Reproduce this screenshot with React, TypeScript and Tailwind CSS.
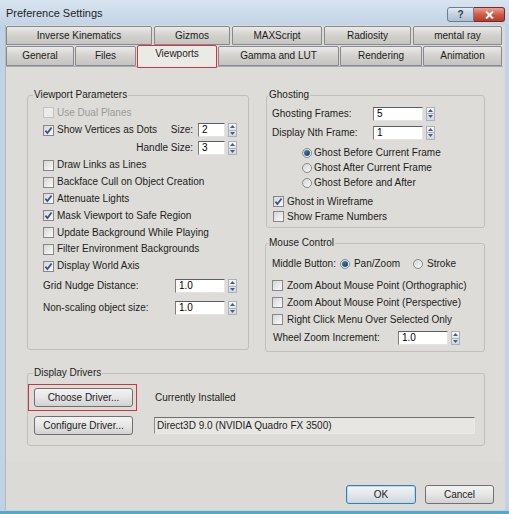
import React from 'react';

const sans = "font-['Liberation_Sans',Arial,sans-serif]";

type Tab = { label: string; w: string; active?: boolean };

const topTabs: Tab[] = [
  { label: 'Inverse Kinematics', w: 'w-[146px]' },
  { label: 'Gizmos', w: 'w-[76px]' },
  { label: 'MAXScript', w: 'w-[90px]' },
  { label: 'Radiosity', w: 'w-[87px]' },
  { label: 'mental ray', w: 'w-[89px]' },
];

const bottomTabs: Tab[] = [
  { label: 'General', w: 'w-[68px]' },
  { label: 'Files', w: 'w-[61px]' },
  { label: 'Viewports', w: 'w-[80px]', active: true },
  { label: 'Gamma and LUT', w: 'w-[121px]' },
  { label: 'Rendering', w: 'w-[82px]' },
  { label: 'Animation', w: 'w-[79px]' },
];

function TabButton({ tab }: { tab: Tab }) {
  if (tab.active) {
    return (
      <div
        className={`relative z-10 -mt-px flex h-[23px] shrink-0 justify-center rounded-t-[2px] border border-[#d3353c] bg-[#ebeae7] pt-[2px] leading-[12px] ${tab.w}`}
      >
        {tab.label}
      </div>
    );
  }
  return (
    <div
      className={`flex h-full shrink-0 items-center justify-center rounded-t-[2px] border border-[#86898f] bg-gradient-to-b from-[#ebeae8] via-[#d3d1cd] to-[#c6c4c0] ${tab.w}`}
    >
      {tab.label}
    </div>
  );
}

function Check({ on, off }: { on?: boolean; off?: boolean }) {
  return (
    <span
      className={
        off
          ? 'flex h-[11px] w-[11px] shrink-0 items-center justify-center border border-[#c2c2c2] bg-[#ecebe9]'
          : 'flex h-[11px] w-[11px] shrink-0 items-center justify-center border border-[#878787] bg-gradient-to-br from-[#d6d6d6] to-[#fbfbfb]'
      }
    >
      {on && (
        <svg width="9" height="9" viewBox="0 0 9 9">
          <path d="M1.4 4.6 L3.4 7.1 L7.6 1.4" fill="none" stroke="#3a4f8c" strokeWidth="1.7" />
        </svg>
      )}
    </span>
  );
}

function Radio({ on }: { on?: boolean }) {
  return (
    <span className="flex h-[10px] w-[10px] shrink-0 items-center justify-center rounded-full border border-[#8a8a8a] bg-gradient-to-br from-[#d4d4d4] to-[#fafafa]">
      {on && <span className="h-[6px] w-[6px] rounded-full bg-gradient-to-br from-[#3f86b8] to-[#173f6b]" />}
    </span>
  );
}

function Field({ value, w }: { value: string; w: string }) {
  return (
    <span
      className={`flex h-[14px] shrink-0 items-center border border-t-[#5d5d5d] border-l-[#7c7c7c] border-r-[#e4e4e4] border-b-[#e4e4e4] bg-white pl-[3px] text-black ${w}`}
    >
      {value}
    </span>
  );
}

function Spin() {
  return (
    <span className="ml-[3px] flex h-[14px] w-[9px] shrink-0 flex-col border border-[#a9b1bd] bg-gradient-to-b from-[#f4f6f9] to-[#d3d9e2]">
      <span className="flex flex-1 items-center justify-center border-b border-[#a9b1bd]">
        <svg width="5" height="3" viewBox="0 0 5 3">
          <path d="M0 3 L2.5 0 L5 3Z" fill="#4f5c72" />
        </svg>
      </span>
      <span className="flex flex-1 items-center justify-center">
        <svg width="5" height="3" viewBox="0 0 5 3">
          <path d="M0 0 L2.5 3 L5 0Z" fill="#4f5c72" />
        </svg>
      </span>
    </span>
  );
}

function CheckRow({ label, on, off, cls }: { label: string; on?: boolean; off?: boolean; cls: string }) {
  return (
    <div className={`flex items-center ${cls}`}>
      <Check on={on} off={off} />
      <span className={off ? 'text-[#9b9a98]' : ''}>{label}</span>
    </div>
  );
}

function WinButton({ label, w, def }: { label: string; w: string; def?: boolean }) {
  return (
    <div
      className={
        def
          ? `flex h-[19px] shrink-0 items-center justify-center rounded-[3px] border border-[#3a7bb0] bg-gradient-to-b from-[#f3f5f7] via-[#e3e7ea] to-[#cfd6dc] shadow-[inset_0_0_0_1px_#b4dcf5] ${w}`
          : `flex h-[19px] shrink-0 items-center justify-center rounded-[3px] border border-[#707070] bg-gradient-to-b from-[#f3f3f3] via-[#e6e6e6] to-[#d2d2d2] ${w}`
      }
    >
      {label}
    </div>
  );
}

export default function App() {
  return (
    <div className={`flex h-[514px] w-[509px] flex-col border-b-[3px] border-[#59a7c7] bg-[#bfd2e6] text-[10px] leading-[12px] text-[#1c1c1c] ${sans}`}>
      {/* title bar */}
      <div className="flex h-[25px] shrink-0 items-start bg-gradient-to-b from-[#d8e4f0] to-[#c3d4e6] pl-[6px] pr-[4px]">
        <span className="mt-[6px] text-[11px] leading-[14px] text-[#1e1e1e]">Preference Settings</span>
        <div className="ml-auto mt-[7px] flex">
          <div className="flex h-[15px] w-[27px] items-center justify-center rounded-l-[3px] border border-[#6e7d90] bg-gradient-to-b from-[#e3ebf4] via-[#c4d1df] to-[#aebfd2] text-[10px] font-bold text-[#2d3b4e]">
            ?
          </div>
          <div className="flex h-[15px] w-[31px] items-center justify-center rounded-r-[3px] border border-l-0 border-[#7a2a22] bg-gradient-to-b from-[#e8a294] via-[#d0594a] to-[#b93a2a]">
            <svg width="9" height="8" viewBox="0 0 9 8">
              <path d="M1 0.5 L8 7.5 M8 0.5 L1 7.5" stroke="#ffffff" strokeWidth="2" />
            </svg>
          </div>
        </div>
      </div>

      {/* client */}
      <div className="mb-px ml-[5px] mr-[4px] flex flex-1 flex-col border-l border-[#b8b8b8] bg-[#dcdad6]">
        {/* tabs */}
        <div className="flex flex-col pt-px">
          <div className="flex h-[19px] gap-[2px]">
            {topTabs.map((t) => (
              <TabButton key={t.label} tab={t} />
            ))}
          </div>
          <div className="mt-px flex h-[20px] gap-px">
            {bottomTabs.map((t) => (
              <TabButton key={t.label} tab={t} />
            ))}
          </div>
        </div>

        {/* tab page */}
        <div className="mr-[2px] border-t border-[#a9abae] bg-[#dedcd8] pb-[15px] pl-[21px] pt-[22px]">
          <div className="flex gap-[17px]">
            {/* Viewport Parameters */}
            <fieldset className="h-[261px] w-[222px] shrink-0 rounded-[3px] border border-[#c1bfbb]">
              <legend className="ml-[5px] px-[1px]">Viewport Parameters</legend>
              <div className="flex flex-col pl-[15px] pr-[11px] pt-[3px]">
                <CheckRow label="Use Dual Planes" off cls="h-[17px] gap-[3px]" />
                <div className="flex h-[18px] items-center">
                  <CheckRow label="Show Vertices as Dots" on cls="gap-[3px]" />
                  <span className="ml-auto mr-[5px]">Size:</span>
                  <Field value="2" w="w-[27px]" />
                  <Spin />
                </div>
                <div className="flex h-[18px] items-center justify-end">
                  <span className="mr-[5px]">Handle Size:</span>
                  <Field value="3" w="w-[27px]" />
                  <Spin />
                </div>
                <CheckRow label="Draw Links as Lines" cls="h-[16.8px] gap-[3px]" />
                <CheckRow label="Backface Cull on Object Creation" cls="h-[16.8px] gap-[3px]" />
                <CheckRow label="Attenuate Lights" on cls="h-[16.8px] gap-[3px]" />
                <CheckRow label="Mask Viewport to Safe Region" on cls="h-[16.8px] gap-[3px]" />
                <CheckRow label="Update Background While Playing" cls="h-[16.8px] gap-[3px]" />
                <CheckRow label="Filter Environment Backgrounds" cls="h-[16.8px] gap-[3px]" />
                <CheckRow label="Display World Axis" on cls="h-[16.8px] gap-[3px]" />
                <div className="flex h-[23px] items-center">
                  <span>Grid Nudge Distance:</span>
                  <span className="ml-auto" />
                  <Field value="1.0" w="w-[50px]" />
                  <Spin />
                </div>
                <div className="flex h-[21px] items-center">
                  <span>Non-scaling object size:</span>
                  <span className="ml-auto" />
                  <Field value="1.0" w="w-[50px]" />
                  <Spin />
                </div>
              </div>
            </fieldset>

            <div className="flex w-[219px] shrink-0 flex-col gap-[9px]">
              {/* Ghosting */}
              <fieldset className="h-[139px] rounded-[3px] border border-[#c1bfbb]">
                <legend className="ml-[1px] px-[1px]">Ghosting</legend>
                <div className="flex flex-col pl-[5px] pt-[3px]">
                  <div className="flex h-[19px] items-center">
                    <span className="w-[101px]">Ghosting Frames:</span>
                    <Field value="5" w="w-[50px]" />
                    <Spin />
                  </div>
                  <div className="flex h-[19px] items-center">
                    <span className="w-[101px]">Display Nth Frame:</span>
                    <Field value="1" w="w-[50px]" />
                    <Spin />
                  </div>
                  <div className="mt-[3px] flex flex-col pl-[30px]">
                    <div className="flex h-[15px] items-center gap-[2px]">
                      <Radio on />
                      <span>Ghost Before Current Frame</span>
                    </div>
                    <div className="flex h-[15px] items-center gap-[2px]">
                      <Radio />
                      <span>Ghost After Current Frame</span>
                    </div>
                    <div className="flex h-[15px] items-center gap-[2px]">
                      <Radio />
                      <span>Ghost Before and After</span>
                    </div>
                  </div>
                  <div className="mt-[4px] flex flex-col pl-px">
                    <CheckRow label="Ghost in Wireframe" on cls="h-[15px] gap-[3px]" />
                    <CheckRow label="Show Frame Numbers" cls="h-[15px] gap-[3px]" />
                  </div>
                </div>
              </fieldset>

              {/* Mouse Control */}
              <fieldset className="-ml-px h-[115px] rounded-[3px] border border-[#c1bfbb]">
                <legend className="ml-[2px] px-[1px]">Mouse Control</legend>
                <div className="flex flex-col pl-[6px] pt-[6px]">
                  <div className="flex h-[18px] items-center">
                    <span>Middle Button:</span>
                    <span className="ml-[4px] flex items-center gap-[4px]">
                      <Radio on />
                      Pan/Zoom
                    </span>
                    <span className="ml-[13px] flex items-center gap-[4px]">
                      <Radio />
                      Stroke
                    </span>
                  </div>
                  <div className="mt-[4px] flex flex-col">
                    <CheckRow label="Zoom About Mouse Point (Orthographic)" cls="h-[17px] gap-[4px]" />
                    <CheckRow label="Zoom About Mouse Point (Perspective)" cls="h-[17px] gap-[4px]" />
                    <CheckRow label="Right Click Menu Over Selected Only" cls="h-[17px] gap-[4px]" />
                  </div>
                  <div className="mt-px flex h-[18px] items-center">
                    <span className="w-[126px] pl-px">Wheel Zoom Increment:</span>
                    <Field value="1.0" w="w-[50px]" />
                    <Spin />
                  </div>
                </div>
              </fieldset>
            </div>
          </div>

          {/* Display Drivers */}
          <fieldset className="mt-[15px] h-[79px] w-[458px] rounded-[3px] border border-[#c1bfbb]">
            <legend className="ml-[5px] px-[1px]">Display Drivers</legend>
            <div className="flex flex-col">
              <div className="mt-[5px] flex items-center">
                <div className="flex h-[27px] w-[109px] items-center border border-[#d0343b] pl-[5px]">
                  <WinButton label="Choose Driver..." w="w-[99px]" />
                </div>
                <span className="ml-[18px]">Currently Installed</span>
              </div>
              <div className="mt-[5px] flex items-center">
                <div className="ml-[6px]">
                  <WinButton label="Configure Driver..." w="w-[99px]" />
                </div>
                <span className="ml-[21px] flex h-[17px] w-[321px] items-center border border-t-[#6f6f6f] border-l-[#8c8c8c] border-r-[#e9e9e9] border-b-[#e9e9e9] bg-[#e7e6e3] pl-[2px]">
                  Direct3D 9.0 (NVIDIA Quadro FX 3500)
                </span>
              </div>
            </div>
          </fieldset>
        </div>

        {/* dialog buttons */}
        <div className="mt-[24px] flex justify-end gap-[9px] pr-[11px]">
          <WinButton label="OK" w="w-[70px]" def />
          <WinButton label="Cancel" w="w-[69px]" />
        </div>
      </div>
    </div>
  );
}
